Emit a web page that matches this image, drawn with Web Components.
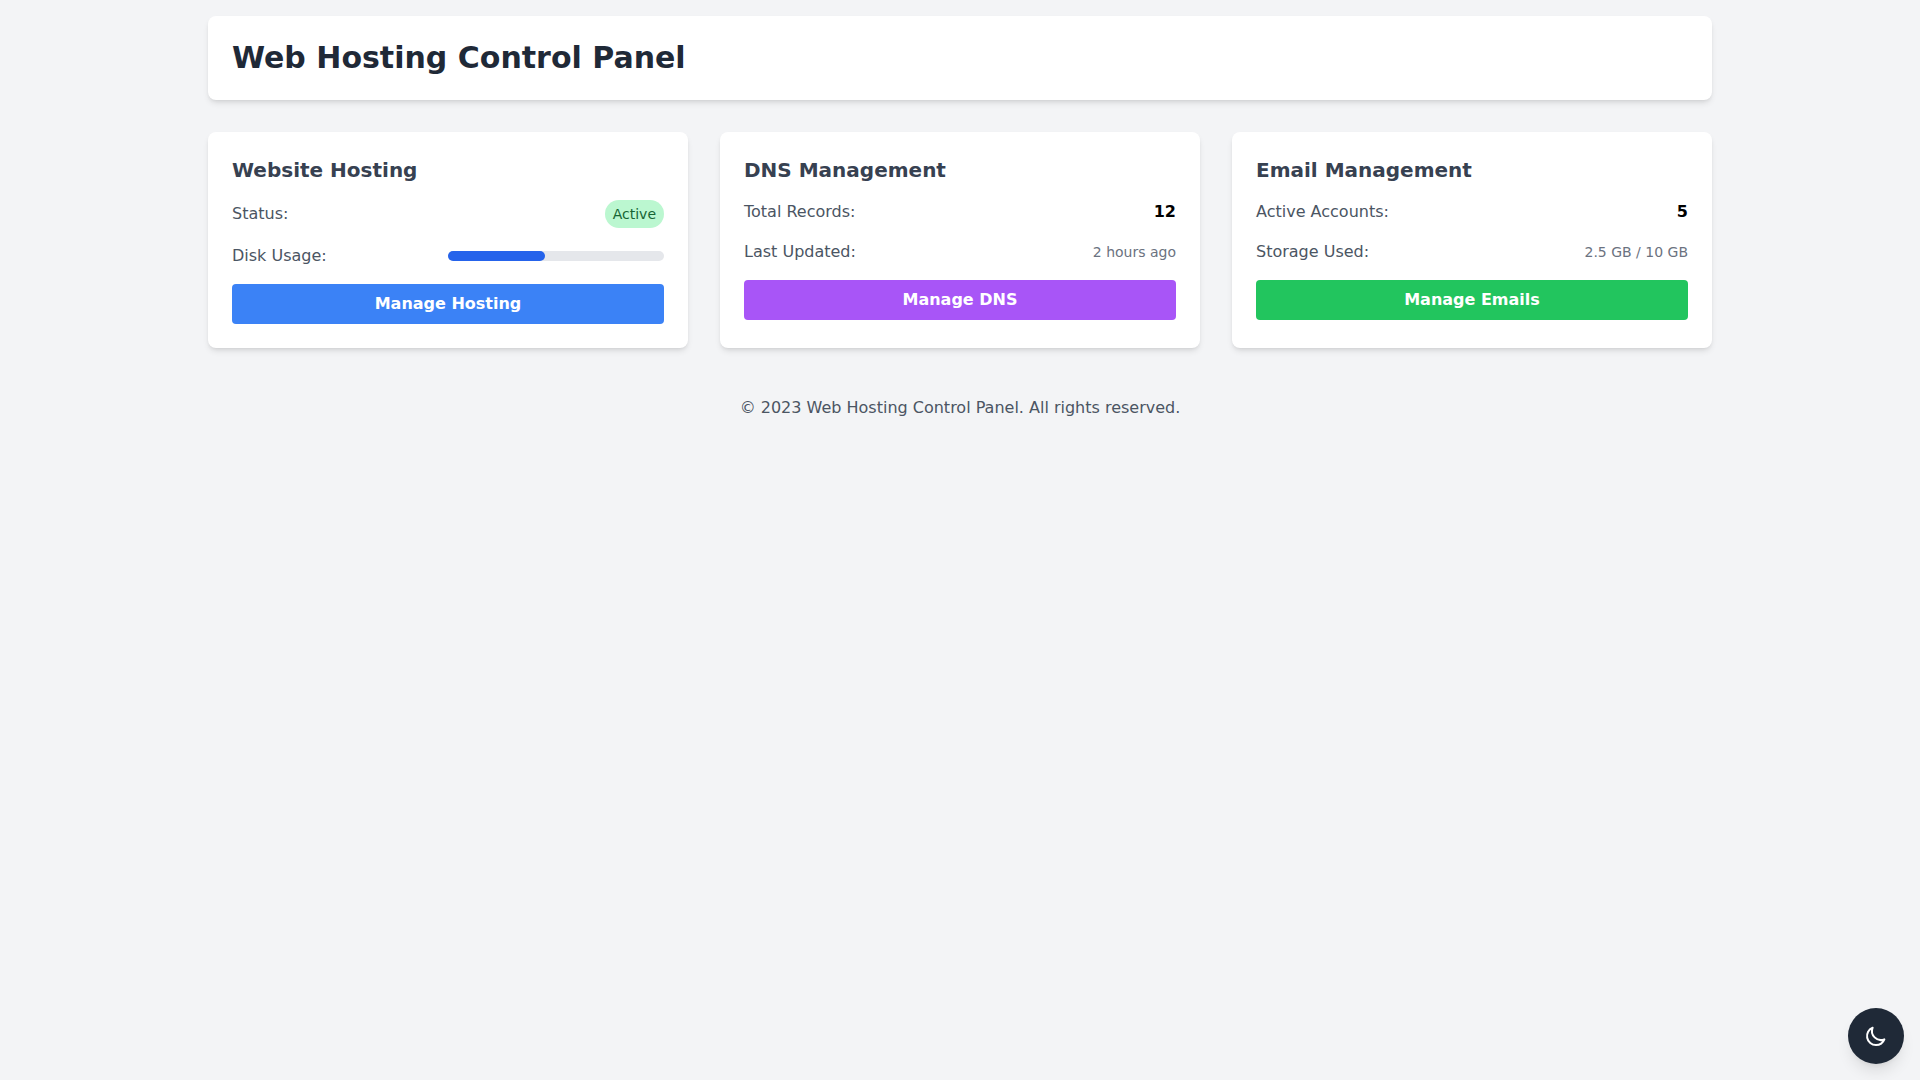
<!DOCTYPE html>
<html lang="en">
<head>
    <meta charset="UTF-8">
    <meta name="viewport" content="width=device-width, initial-scale=1.0">
    <title>Web Hosting Control Panel</title>
    <style>
        body {
            margin: 0;
            min-height: 100vh;
            background-color: #f3f4f6;
            color: #000;
            font-family: "DejaVu Sans", sans-serif;
            font-size: 16px;
            line-height: 24px;
        }
    </style>
</head>
<body>
    <control-panel></control-panel>

    <script>
        class PanelHeader extends HTMLElement {
            constructor() {
                super();
                this.attachShadow({ mode: 'open' }).innerHTML = `
                <style>
                    :host {
                        display: block;
                        padding: 24px;
                        margin-bottom: 32px;
                        background-color: #fff;
                        border-radius: 8px;
                        box-shadow: 0 4px 6px -1px rgba(0, 0, 0, 0.1), 0 2px 4px -2px rgba(0, 0, 0, 0.1);
                    }

                    h1 {
                        margin: 0;
                        font-size: 30px;
                        line-height: 36px;
                        font-weight: 700;
                        color: #1f2937;
                    }
                </style>

                <h1><slot></slot></h1>`;
            }
        }

        class ServiceCard extends HTMLElement {
            constructor() {
                super();
                this.attachShadow({ mode: 'open' }).innerHTML = `
                <style>
                    :host {
                        display: block;
                        padding: 24px;
                        background-color: #fff;
                        border-radius: 8px;
                        box-shadow: 0 4px 6px -1px rgba(0, 0, 0, 0.1), 0 2px 4px -2px rgba(0, 0, 0, 0.1);
                    }

                    h2 {
                        margin: 0 0 16px;
                        font-size: 20px;
                        line-height: 28px;
                        font-weight: 600;
                        color: #374151;
                    }

                    button {
                        display: block;
                        width: 100%;
                        padding: 8px 16px;
                        border: 0;
                        border-radius: 4px;
                        background-color: var(--accent, #3b82f6);
                        color: #fff;
                        font: inherit;
                        font-weight: 700;
                        cursor: pointer;
                    }
                </style>

                <h2>${this.getAttribute('heading')}</h2>
                <slot></slot>
                <button type="button">${this.getAttribute('action')}</button>`;
            }
        }

        class StatRow extends HTMLElement {
            constructor() {
                super();
                this.attachShadow({ mode: 'open' }).innerHTML = `
                <style>
                    :host {
                        display: flex;
                        align-items: center;
                        justify-content: space-between;
                        margin-bottom: 16px;
                    }

                    .label {
                        color: #4b5563;
                    }

                    ::slotted(strong) {
                        font-weight: 600;
                    }

                    ::slotted(small) {
                        font-size: 14px;
                        line-height: 20px;
                        color: #6b7280;
                    }
                </style>

                <span class="label">${this.getAttribute('label')}</span>
                <slot></slot>`;
            }
        }

        class StatusBadge extends HTMLElement {
            constructor() {
                super();
                this.attachShadow({ mode: 'open' }).innerHTML = `
                <style>
                    :host {
                        display: block;
                        padding: 4px 8px;
                        border-radius: 9999px;
                        background-color: #bbf7d0;
                        color: #166534;
                        font-size: 14px;
                        line-height: 20px;
                    }
                </style>

                <slot></slot>`;
            }
        }

        class UsageBar extends HTMLElement {
            constructor() {
                super();
                this.attachShadow({ mode: 'open' }).innerHTML = `
                <style>
                    :host {
                        display: block;
                        width: 50%;
                        height: 10px;
                        border-radius: 9999px;
                        background-color: #e5e7eb;
                    }

                    .fill {
                        width: ${this.getAttribute('value')}%;
                        height: 10px;
                        border-radius: 9999px;
                        background-color: #2563eb;
                    }
                </style>

                <div class="fill"></div>`;
            }
        }

        class ThemeToggle extends HTMLElement {
            constructor() {
                super();
                this.attachShadow({ mode: 'open' }).innerHTML = `
                <style>
                    :host {
                        display: block;
                        position: fixed;
                        right: 16px;
                        bottom: 16px;
                    }

                    button {
                        display: block;
                        padding: 16px;
                        border: 0;
                        border-radius: 9999px;
                        background-color: #1f2937;
                        color: #fff;
                        box-shadow: 0 10px 15px -3px rgba(0, 0, 0, 0.1), 0 4px 6px -4px rgba(0, 0, 0, 0.1);
                        cursor: pointer;
                    }

                    svg {
                        display: block;
                        width: 24px;
                        height: 24px;
                    }
                </style>

                <button type="button">
                    <svg fill="none" viewBox="0 0 24 24" stroke="currentColor" stroke-width="2" stroke-linecap="round" stroke-linejoin="round">
                        <path d="M20.354 15.354A9 9 0 018.646 3.646 9.003 9.003 0 0012 21a9.003 9.003 0 008.354-5.646z"/>
                    </svg>
                </button>`;
            }
        }

        class ControlPanel extends HTMLElement {
            constructor() {
                super();
                this.attachShadow({ mode: 'open' }).innerHTML = `
                <style>
                    :host {
                        display: block;
                        box-sizing: border-box;
                        max-width: 1536px;
                        margin: 0 auto;
                        padding: 16px;
                    }

                    main {
                        display: grid;
                        grid-template-columns: repeat(3, minmax(0, 1fr));
                        gap: 32px;
                    }

                    .dns {
                        --accent: #a855f7;
                    }

                    .email {
                        --accent: #22c55e;
                    }

                    footer {
                        margin-top: 48px;
                        text-align: center;
                        color: #4b5563;
                    }
                </style>

                <panel-header>Web Hosting Control Panel</panel-header>
                <main>
                    <service-card heading="Website Hosting" action="Manage Hosting">
                        <stat-row label="Status:"><status-badge>Active</status-badge></stat-row>
                        <stat-row label="Disk Usage:"><usage-bar value="45"></usage-bar></stat-row>
                    </service-card>
                    <service-card class="dns" heading="DNS Management" action="Manage DNS">
                        <stat-row label="Total Records:"><strong>12</strong></stat-row>
                        <stat-row label="Last Updated:"><small>2 hours ago</small></stat-row>
                    </service-card>
                    <service-card class="email" heading="Email Management" action="Manage Emails">
                        <stat-row label="Active Accounts:"><strong>5</strong></stat-row>
                        <stat-row label="Storage Used:"><small>2.5 GB / 10 GB</small></stat-row>
                    </service-card>
                </main>
                <footer>© 2023 Web Hosting Control Panel. All rights reserved.</footer>
                <theme-toggle></theme-toggle>`;
            }
        }

        customElements.define('panel-header', PanelHeader);
        customElements.define('service-card', ServiceCard);
        customElements.define('stat-row', StatRow);
        customElements.define('status-badge', StatusBadge);
        customElements.define('usage-bar', UsageBar);
        customElements.define('theme-toggle', ThemeToggle);
        customElements.define('control-panel', ControlPanel);
    </script>
</body>
</html>
